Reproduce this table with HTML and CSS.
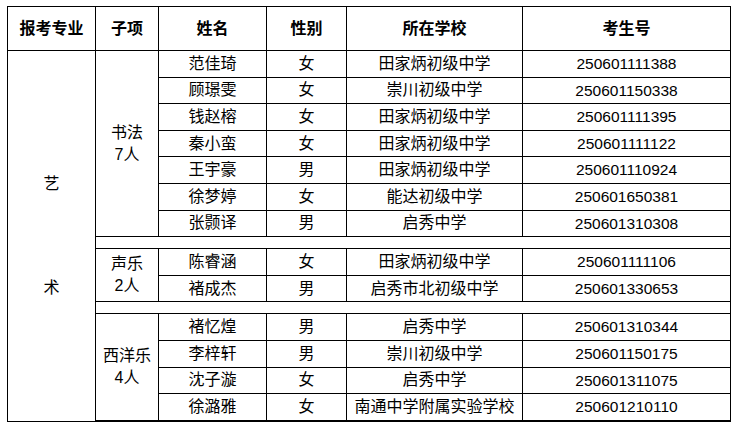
FILE: index.html
```html
<!DOCTYPE html>
<html lang="zh-CN">
<head>
<meta charset="utf-8">
<title>考生名单</title>
<link rel="stylesheet" href="styles.css">
</head>
<body>
<div class="sheet">
  <div class="cell head">报考专业</div>
  <div class="cell head">子项</div>
  <div class="cell head">姓名</div>
  <div class="cell head">性别</div>
  <div class="cell head">所在学校</div>
  <div class="cell head">考生号</div>

  <div class="cell major"><span>艺</span><span>术</span></div>

  <div class="cell sub span7">书法<br>7人</div>
  <div class="cell">范佳琦</div><div class="cell">女</div><div class="cell">田家炳初级中学</div><div class="cell num">250601111388</div>
  <div class="cell">顾璟雯</div><div class="cell">女</div><div class="cell">崇川初级中学</div><div class="cell num">250601150338</div>
  <div class="cell">钱赵榕</div><div class="cell">女</div><div class="cell">田家炳初级中学</div><div class="cell num">250601111395</div>
  <div class="cell">秦小蛮</div><div class="cell">女</div><div class="cell">田家炳初级中学</div><div class="cell num">250601111122</div>
  <div class="cell">王宇豪</div><div class="cell">男</div><div class="cell">田家炳初级中学</div><div class="cell num">250601110924</div>
  <div class="cell">徐梦婷</div><div class="cell">女</div><div class="cell">能达初级中学</div><div class="cell num">250601650381</div>
  <div class="cell">张颢译</div><div class="cell">男</div><div class="cell">启秀中学</div><div class="cell num">250601310308</div>

  <div class="cell spacer"></div>

  <div class="cell sub span2">声乐<br>2人</div>
  <div class="cell">陈睿涵</div><div class="cell">女</div><div class="cell">田家炳初级中学</div><div class="cell num">250601111106</div>
  <div class="cell">褚成杰</div><div class="cell">男</div><div class="cell">启秀市北初级中学</div><div class="cell num">250601330653</div>

  <div class="cell spacer"></div>

  <div class="cell sub span4">西洋乐<br>4人</div>
  <div class="cell">褚忆煌</div><div class="cell">男</div><div class="cell">启秀中学</div><div class="cell num">250601310344</div>
  <div class="cell">李梓轩</div><div class="cell">男</div><div class="cell">崇川初级中学</div><div class="cell num">250601150175</div>
  <div class="cell">沈子漩</div><div class="cell">女</div><div class="cell">启秀中学</div><div class="cell num">250601311075</div>
  <div class="cell">徐潞雅</div><div class="cell">女</div><div class="cell">南通中学附属实验学校</div><div class="cell num">250601210110</div>
</div>
</body>
</html>
```

FILE: styles.css
```css
html, body {
  margin: 0;
  padding: 0;
  background: #ffffff;
}

body {
  font-family: "Liberation Sans", "Noto Sans CJK SC", sans-serif;
  font-size: 16px;
  color: #000000;
}

.sheet {
  display: grid;
  grid-template-columns: 87px 62px 107px 79px 175px 207px;
  grid-template-rows: 43px repeat(7, 25.6px) 11px repeat(2, 25.6px) 11px repeat(4, 25.6px);
  gap: 1px;
  padding: 1px;
  background: #000000;
  width: max-content;
  margin: 6px 0 0 7px;
}

.cell {
  background: #ffffff;
  display: flex;
  align-items: center;
  justify-content: center;
  text-align: center;
  line-height: 1;
  white-space: nowrap;
}

.head {
  font-weight: bold;
}

.num {
  font-size: 15.5px;
}

.major {
  grid-row: span 16;
  flex-direction: column;
  gap: 88px;
}

.sub {
  line-height: 22px;
}

.span7 { grid-row: span 7; }
.span2 { grid-row: span 2; }
.span4 { grid-row: span 4; }

.spacer {
  grid-column: 2 / span 5;
}
```
